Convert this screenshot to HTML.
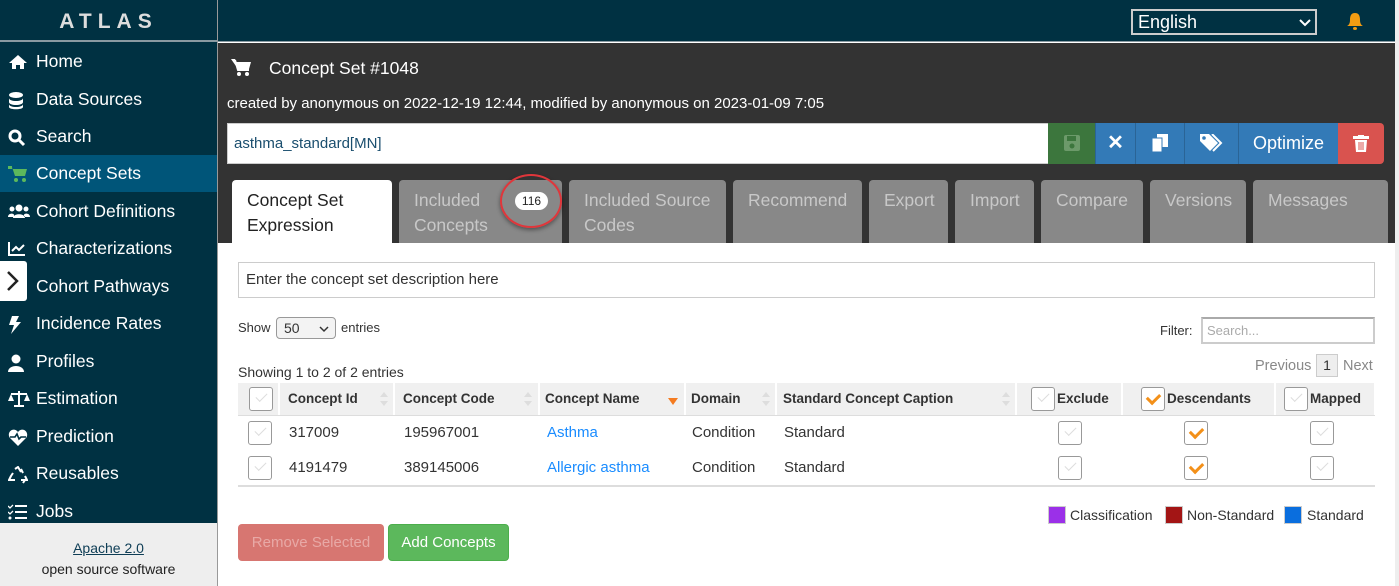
<!DOCTYPE html>
<html><head><meta charset="utf-8"><style>
*{box-sizing:border-box;margin:0;padding:0}
body{width:1399px;height:586px;overflow:hidden;font-family:"Liberation Sans",sans-serif;background:#fff;position:relative;font-size:14px;color:#333}
.abs{position:absolute}
#side{left:0;top:0;width:217px;height:586px;background:#003142}
#logo{left:0;top:0;width:217px;height:42px;border-bottom:2px solid #8a9aa2;color:#ddd;font-size:21px;letter-spacing:6px;text-align:center;line-height:44px;font-weight:bold}
.nav{position:absolute;left:0;width:217px;height:37px;color:#fff;font-size:17.5px;line-height:37px;padding-left:36px}
.nav svg{position:absolute;left:8px;top:11px}
#foot{left:0;top:523px;width:217px;height:63px;background:#eee;text-align:center;font-size:14px;color:#222;padding-top:15px;line-height:21px}
#top{left:218px;top:0;width:1181px;height:42px;background:#003142;border-bottom:1px solid #8a9aa2}
#dark{left:218px;top:43px;width:1177px;height:200px;background:#333}
.tab{position:absolute;top:180px;height:63px;background:#888;color:#c8c8c8;font-size:17.5px;border-radius:4px 4px 0 0;padding:8px 15px;line-height:25px;white-space:nowrap}
.btn{position:absolute;top:123px;height:41px;background:#337ab7;border-left:1px solid #2a6496;color:#fff;text-align:center;line-height:41px;font-size:18px}
.cb{position:absolute;width:24px;height:24px;border:1px solid #999;border-radius:3px;background:#fff}
.cb.on::after{content:"";position:absolute;width:10px;height:6px;border-left:3px solid #f39019;border-bottom:3px solid #f39019;transform:rotate(-45deg);top:5px;left:5px}
.cb.off::after{content:"";position:absolute;left:6px;top:5px;width:10px;height:5px;border-left:1px solid #ddd;border-bottom:1px solid #ddd;transform:rotate(-45deg)}
.hd{position:absolute;top:383px;height:32px;background:#f0f0f0;font-weight:bold;font-size:13.5px;line-height:32px;padding-left:8px;border-right:2px solid #fff;color:#333}
.c{position:absolute;font-size:15px;line-height:20px}
</style></head><body>
<div id="side" class="abs">
<div id="logo" class="abs">ATLAS</div>
<div class="abs" style="left:0;top:155px;width:217px;height:37px;background:#005579"></div>
<div class="nav" style="top:43px"><svg width="20" height="16" viewBox="0 0 20 16"><path d="M10 1L1 9h3v6h4v-4h4v4h4V9h3z" fill="#fff"/></svg>Home</div>
<div class="nav" style="top:81px"><svg width="16" height="18" viewBox="0 0 16 18"><ellipse cx="8" cy="3" rx="7" ry="3" fill="#fff"/><path d="M1 6c0 4 14 4 14 0v4c0 4-14 4-14 0zM1 12c0 4 14 4 14 0v3c0 3-14 3-14 0z" fill="#fff"/></svg>Data Sources</div>
<div class="nav" style="top:118px"><svg width="18" height="18" viewBox="0 0 18 18"><circle cx="7" cy="7" r="5" stroke="#fff" stroke-width="3" fill="none"/><path d="M11 11l5 5" stroke="#fff" stroke-width="3"/></svg>Search</div>
<div class="nav" style="top:155px"><svg width="20" height="16" viewBox="0 0 20 16"><path d="M4 1l3 9h10l2-7H5z" fill="#5cb85c"/><circle cx="8" cy="14" r="2" fill="#5cb85c"/><circle cx="16" cy="14" r="2" fill="#5cb85c"/><rect x="0" y="0" width="4" height="3" fill="#5cb85c"/></svg>Concept Sets</div>
<div class="nav" style="top:193px"><svg width="22" height="16" viewBox="0 0 22 16"><circle cx="11" cy="4" r="3.5" fill="#fff"/><circle cx="4" cy="5" r="2.5" fill="#fff"/><circle cx="18" cy="5" r="2.5" fill="#fff"/><path d="M5 14c0-5 12-5 12 0zM0 13c0-4 6-4 6-2v2zM22 13c0-4-6-4-6-2v2z" fill="#fff"/></svg>Cohort Definitions</div>
<div class="nav" style="top:230px"><svg width="18" height="16" viewBox="0 0 18 16"><path d="M1 1v13h16" stroke="#fff" stroke-width="2" fill="none"/><path d="M4 10l4-4 3 3 5-5" stroke="#fff" stroke-width="2" fill="none"/></svg>Characterizations</div>
<div class="abs" style="left:0;top:261px;width:27px;height:40px;background:#fff;border-radius:0 3px 3px 0"><svg width="27" height="40"><path d="M8 11l9 9-9 9" stroke="#222" stroke-width="2.5" fill="none"/></svg></div>
<div class="nav" style="top:268px">Cohort Pathways</div>
<div class="nav" style="top:305px"><svg width="14" height="18" viewBox="0 0 14 18"><path d="M4 0h7L8 6h5L3 18l3-9H1z" fill="#fff"/></svg>Incidence Rates</div>
<div class="nav" style="top:343px"><svg width="16" height="18" viewBox="0 0 16 18"><circle cx="8" cy="5" r="4.5" fill="#fff"/><path d="M0 18c0-8 16-8 16 0z" fill="#fff"/></svg>Profiles</div>
<div class="nav" style="top:380px"><svg width="22" height="16" viewBox="0 0 22 16"><path d="M11 0v15M3 3h16M6 15h10" stroke="#fff" stroke-width="2"/><path d="M0 10l3-7 3 7zM16 10l3-7 3 7z" fill="#fff"/></svg>Estimation</div>
<div class="nav" style="top:418px"><svg width="20" height="17" viewBox="0 0 20 17"><path d="M10 17L2 9C-2 4 5-3 10 3c5-6 12 1 8 6z" fill="#fff"/><path d="M2 8h5l2-3 2 5 2-2h5" stroke="#003142" stroke-width="1.6" fill="none"/></svg>Prediction</div>
<div class="nav" style="top:455px"><svg width="20" height="18" viewBox="0 0 20 18"><path d="M7 3l3-2 3 5M3 10l-2 4h6M17 10l2 4h-6M13 3l2 4M5 7L3 10M15 17l2-3" stroke="#fff" stroke-width="2" fill="none"/></svg>Reusables</div>
<div class="nav" style="top:493px"><svg width="20" height="16" viewBox="0 0 20 16"><path d="M7 2h12M7 8h12M7 14h12" stroke="#fff" stroke-width="2"/><path d="M0 2l2 2 3-3M0 8l2 2 3-3" stroke="#fff" stroke-width="1.3" fill="none"/><circle cx="2" cy="14" r="1.5" fill="#fff"/></svg>Jobs</div>
<div id="foot" class="abs"><span style="text-decoration:underline;color:#0e3d55">Apache 2.0</span><br>open source software</div>
</div>
<div class="abs" style="left:217px;top:0;width:1px;height:586px;background:#999"></div>
<div id="top" class="abs"></div>
<div class="abs" style="left:1131px;top:9px;width:186px;height:26px;border:2px solid #ccc;color:#fff;font-size:18px;line-height:22px;padding-left:5px">English<svg class="abs" style="left:166px;top:8px" width="12" height="8"><path d="M1 1l5 5 5-5" stroke="#fff" stroke-width="2" fill="none"/></svg></div>
<svg class="abs" style="left:1346px;top:12px" width="18" height="19" viewBox="0 0 18 19"><path d="M9 1c4 0 5 3 5 7 0 3 1 5 3 6H1c2-1 3-3 3-6 0-4 1-7 5-7z" fill="#f39c12"/><rect x="7" y="15" width="4" height="3" rx="2" fill="#f39c12"/></svg>
<div id="dark" class="abs"></div>
<div class="abs" style="left:1395px;top:0;width:4px;height:586px;background:#eee"></div>
<svg class="abs" style="left:231px;top:59px" width="20" height="17" viewBox="0 0 20 17"><path d="M0 0h4l1 3h15l-2 7H7z" fill="#fff"/><path d="M4 1l3 10h11" stroke="#fff" stroke-width="2" fill="none"/><circle cx="8" cy="15" r="2" fill="#fff"/><circle cx="16" cy="15" r="2" fill="#fff"/></svg>
<div class="abs" style="left:269px;top:58px;color:#fff;font-size:17.5px">Concept Set #1048</div>
<div class="abs" style="left:227px;top:95px;color:#fff;font-size:15px">created by anonymous on 2022-12-19 12:44, modified by anonymous on 2023-01-09 7:05</div>
<div class="abs" style="left:227px;top:123px;width:822px;height:41px;background:#fff;border:1px solid #ccc;color:#1a4e6e;font-size:15px;line-height:40px;padding-left:6px">asthma_standard[MN]</div>
<div class="btn" style="left:1048px;width:47px;background:#3c763d;border:none"><svg width="16" height="16" style="margin-top:12px"><rect x="0" y="0" width="16" height="16" rx="2" fill="#6c9a6a"/><rect x="3" y="1" width="9" height="5" fill="#3c763d"/><circle cx="8" cy="11" r="2.5" fill="#3c763d"/></svg></div>
<div class="btn" style="left:1095px;width:40px;font-weight:bold;font-size:20px">✕</div>
<div class="btn" style="left:1135px;width:49px"><svg width="16" height="18" style="margin-top:11px"><rect x="5" y="0" width="11" height="13" fill="#fff"/><rect x="0" y="4" width="10" height="14" fill="#fff" stroke="#337ab7"/></svg></div>
<div class="btn" style="left:1184px;width:54px"><svg width="24" height="18" style="margin-top:11px"><path d="M0 0h9l9 9-8 8-10-10z" fill="#fff"/><circle cx="4" cy="4" r="1.8" fill="#337ab7"/><path d="M12 0l9 9-8 8" stroke="#fff" stroke-width="2" fill="none"/></svg></div>
<div class="btn" style="left:1238px;width:100px">Optimize</div>
<div class="btn" style="left:1338px;width:46px;background:#d9534f;border:none;border-radius:0 4px 4px 0"><svg width="16" height="17" style="margin-top:12px"><rect x="0" y="1" width="16" height="3" fill="#fff"/><rect x="5" y="0" width="6" height="2" fill="#fff"/><path d="M2 5h12l-1 12H3z" fill="#fff"/><path d="M6 7v8M8 7v8M10 7v8" stroke="#d9534f"/></svg></div>
<div class="tab" style="left:232px;width:160px;background:#fff;color:#222">Concept Set<br>Expression</div>
<div class="tab" style="left:399px;width:163px">Included<br>Concepts</div>
<div class="abs" style="left:515px;top:192px;width:33px;height:18px;background:#fff;border-radius:9px;font-size:12px;line-height:18px;text-align:center;color:#222">116</div>
<div class="abs" style="left:500px;top:174px;width:62px;height:54px;border:2px solid #e0363b;border-radius:50%;box-shadow:0 2px 4px rgba(0,0,0,.4)"></div>
<div class="tab" style="left:569px;width:157px">Included Source<br>Codes</div>
<div class="tab" style="left:733px;width:129px">Recommend</div>
<div class="tab" style="left:869px;width:79px">Export</div>
<div class="tab" style="left:955px;width:79px">Import</div>
<div class="tab" style="left:1041px;width:102px">Compare</div>
<div class="tab" style="left:1150px;width:96px">Versions</div>
<div class="tab" style="left:1253px;width:135px">Messages</div>
<div class="abs" style="left:238px;top:262px;width:1137px;height:36px;border:1px solid #ccc;font-size:15px;line-height:34px;padding-left:7px">Enter the concept set description here</div>
<div class="abs" style="left:238px;top:320px;font-size:13px">Show</div>
<div class="abs" style="left:276px;top:317px;width:60px;height:22px;border:1px solid #999;border-radius:4px;background:#f3f3f3;font-size:14px;line-height:20px;padding-left:7px">50<svg class="abs" style="left:42px;top:8px" width="10" height="7"><path d="M1 1l4 4 4-4" stroke="#333" stroke-width="1.5" fill="none"/></svg></div>
<div class="abs" style="left:341px;top:320px;font-size:13px">entries</div>
<div class="abs" style="left:1160px;top:323px;font-size:13px">Filter:</div>
<div class="abs" style="left:1201px;top:317px;width:174px;height:27px;border:2px solid #ccc;border-top-color:#aaa;font-size:13px;color:#aaa;line-height:23px;padding-left:4px">Search...</div>
<div class="abs" style="left:238px;top:364px;font-size:14px">Showing 1 to 2 of 2 entries</div>
<div class="abs" style="left:1255px;top:358px;font-size:14.5px;color:#888">Previous</div>
<div class="abs" style="left:1316px;top:354px;width:22px;height:23px;border:1px solid #ccc;background:#eee;font-size:14px;line-height:21px;text-align:center;color:#333">1</div>
<div class="abs" style="left:1343px;top:358px;font-size:14.5px;color:#888">Next</div>
<div class="hd" style="left:238px;width:42px"></div><div class="cb off" style="left:249px;top:387px"></div>
<div class="hd" style="left:280px;width:115px">Concept Id</div>
<div class="hd" style="left:395px;width:145px">Concept Code</div>
<div class="hd" style="left:540px;width:146px;padding-left:5px">Concept Name</div>
<div class="hd" style="left:686px;width:91px;padding-left:5px">Domain</div>
<div class="hd" style="left:777px;width:240px;padding-left:6px">Standard Concept Caption</div>
<div class="hd" style="left:1017px;width:106px;padding-left:40px">Exclude</div><div class="cb off" style="left:1031px;top:387px"></div>
<div class="hd" style="left:1123px;width:153px;padding-left:44px">Descendants</div><div class="cb on" style="left:1141px;top:387px"></div>
<div class="hd" style="left:1276px;width:98px;padding-left:34px;border-right:none">Mapped</div><div class="cb off" style="left:1284px;top:387px"></div>
<svg class="abs" style="left:668px;top:398px" width="10" height="8"><path d="M0 0h10L5 7z" fill="#f47b20"/></svg>
<svg class="abs" style="left:380px;top:391px" width="8" height="16"><path d="M0 6l4-5 4 5zM0 10l4 5 4-5z" fill="#ddd"/></svg>
<svg class="abs" style="left:524px;top:391px" width="8" height="16"><path d="M0 6l4-5 4 5zM0 10l4 5 4-5z" fill="#ddd"/></svg>
<svg class="abs" style="left:762px;top:391px" width="8" height="16"><path d="M0 6l4-5 4 5zM0 10l4 5 4-5z" fill="#ddd"/></svg>
<svg class="abs" style="left:1002px;top:391px" width="8" height="16"><path d="M0 6l4-5 4 5zM0 10l4 5 4-5z" fill="#ddd"/></svg>
<div class="abs" style="left:238px;top:415px;width:1137px;height:1px;background:#ddd"></div>
<div class="cb off" style="left:248px;top:421px"></div>
<div class="c" style="left:289px;top:423px">317009</div><div class="c" style="left:404px;top:423px">195967001</div><div class="c" style="left:547px;top:423px;color:#1a8cff">Asthma</div><div class="c" style="left:692px;top:423px">Condition</div><div class="c" style="left:784px;top:423px">Standard</div>
<div class="cb off" style="left:1058px;top:421px"></div><div class="cb on" style="left:1184px;top:421px"></div><div class="cb off" style="left:1310px;top:421px"></div>
<div class="cb off" style="left:248px;top:456px"></div>
<div class="c" style="left:289px;top:458px">4191479</div><div class="c" style="left:404px;top:458px">389145006</div><div class="c" style="left:547px;top:458px;color:#1a8cff">Allergic asthma</div><div class="c" style="left:692px;top:458px">Condition</div><div class="c" style="left:784px;top:458px">Standard</div>
<div class="cb off" style="left:1058px;top:456px"></div><div class="cb on" style="left:1184px;top:456px"></div><div class="cb off" style="left:1310px;top:456px"></div>
<div class="abs" style="left:238px;top:485px;width:1137px;height:2px;background:#ddd"></div>
<div class="abs" style="left:1048px;top:506px;width:18px;height:18px;background:#9b30e8;border:1px solid #ccc"></div><div class="abs" style="left:1070px;top:507px;font-size:14px">Classification</div>
<div class="abs" style="left:1165px;top:506px;width:18px;height:18px;background:#a31515;border:1px solid #ccc"></div><div class="abs" style="left:1187px;top:507px;font-size:14px">Non-Standard</div>
<div class="abs" style="left:1284px;top:506px;width:18px;height:18px;background:#0a6ede;border:1px solid #ccc"></div><div class="abs" style="left:1307px;top:507px;font-size:14px">Standard</div>
<div class="abs" style="left:238px;top:524px;width:146px;height:37px;background:#d77671;border-radius:4px;color:#e8a9a6;font-size:15px;line-height:37px;text-align:center">Remove Selected</div>
<div class="abs" style="left:388px;top:524px;width:121px;height:37px;background:#5cb85c;border:1px solid #4cae4c;border-radius:4px;color:#fff;font-size:15px;line-height:35px;text-align:center">Add Concepts</div>
</body></html>
